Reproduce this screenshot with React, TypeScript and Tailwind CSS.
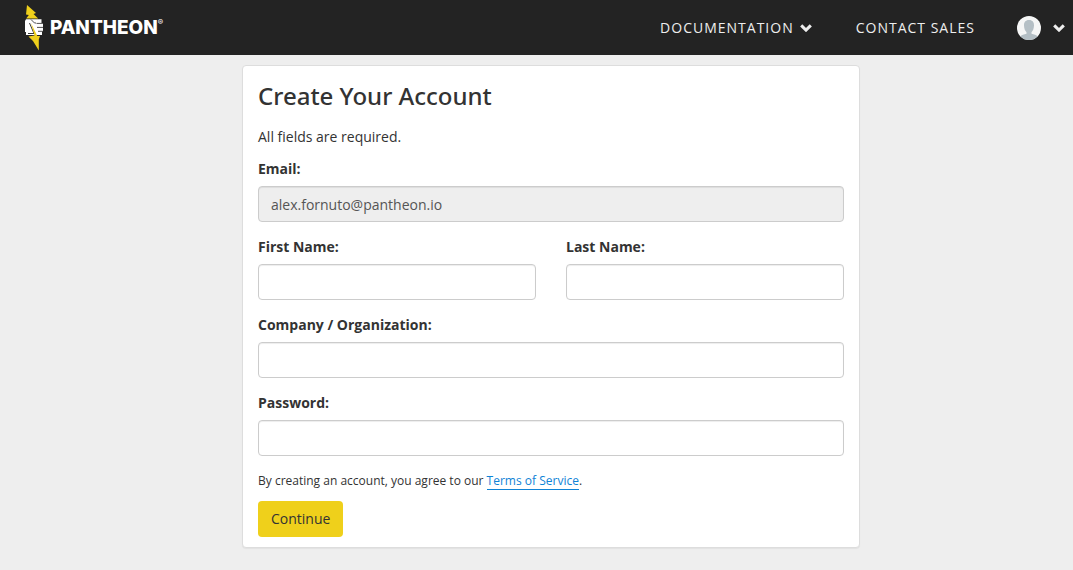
import React from "react";

const inputClass =
  "block h-9 w-full rounded border border-[#cccccc] bg-white px-3 text-sm text-[#555555] shadow-[inset_0_1px_1px_rgba(0,0,0,0.075)] outline-none focus:border-[#66afe9] disabled:bg-[#eeeeee]";

type FieldProps = {
  id: string;
  label: string;
  type?: string;
  value?: string;
  disabled?: boolean;
};

function Field({ id, label, type = "text", value, disabled }: FieldProps) {
  return (
    <div className="mb-[15px] min-w-0 flex-1">
      <label htmlFor={id} className="mb-[7px] block text-sm leading-5 font-bold">
        {label}
      </label>
      <input id={id} type={type} defaultValue={value} disabled={disabled} className={inputClass} />
    </div>
  );
}

function Chevron() {
  return (
    <svg width="12" height="8" viewBox="0 0 12 8" fill="none" aria-hidden="true">
      <path d="M1.2 1.4 6 6.1l4.8-4.7" stroke="#eeeeee" strokeWidth="3" />
    </svg>
  );
}

function Fist() {
  return (
    <svg width="18" height="46" viewBox="0 0 18 46" aria-hidden="true">
      <path d="M2 0 11 8 8.5 9 13.2 13.6H1.2L3.800 10 1 9.500Z" fill="#efd01b" />
      <path d="M1 14.300H16.500V18H18V26.500H17V30H1V27H0V16Z" fill="#ffffff" />
      <path
        d="M11.500 18.400H18M12 22.400H18M13 26.300H18M6 14.500 9.500 18H11"
        stroke="#232323"
        strokeWidth="0.8"
        fill="none"
      />
      <path d="M4.500 18 9 28.500H3" fill="none" stroke="#232323" strokeWidth="0.9" />
      <path d="M6 18 12.300 31H15L13.800 34.500 13.800 45.500 8 36 3.500 31.500 9.500 30.500Z" fill="#efd01b" />
    </svg>
  );
}

function Avatar() {
  return (
    <svg width="24" height="24" viewBox="0 0 24 24" aria-hidden="true">
      <defs>
        <clipPath id="avatar-clip">
          <circle cx="12" cy="12" r="12" />
        </clipPath>
      </defs>
      <g clipPath="url(#avatar-clip)">
        <rect width="24" height="24" fill="#f5f6f6" />
        <path
          d="M12 4c3.600 0 5.200 2.400 5 5.600-.1 3.300-1.200 5.500-2.500 6.700v1.500c2.300.7 5 1.200 6.500 3V24H3v-3.200c1.500-1.800 4.200-2.300 6.500-3v-1.500C8.200 15.100 7.100 12.900 7 9.600 6.800 6.400 8.400 4 12 4Z"
          fill="#b4bfc5"
        />
      </g>
    </svg>
  );
}

export default function App() {
  return (
    <div className="min-h-screen bg-[#eeeeee] font-['Open_Sans',sans-serif] text-sm text-[#333333]">
      <header className="flex h-[55px] items-center justify-between bg-[#232323] pr-2 pl-[25px]">
        <a href="#" aria-label="Pantheon home" className="flex items-center gap-[7px] text-white">
          <Fist />
          <span className="flex items-start font-['Inter',sans-serif]">
            <span className="text-[19px] leading-6 font-extrabold">PANTHEON</span>
            <span className="text-[8px] leading-3">®</span>
          </span>
        </a>
        <nav className="flex items-center tracking-[1px] text-[#eeeeee]">
          <button type="button" className="mr-11 flex items-center gap-1.5 tracking-[1px]">
            DOCUMENTATION <Chevron />
          </button>
          <a href="#" className="mr-[42px]">
            CONTACT SALES
          </a>
          <button type="button" aria-label="Account menu" className="flex items-center gap-3">
            <Avatar />
            <Chevron />
          </button>
        </nav>
      </header>

      <main className="pt-2.5 pb-5 pl-[29px]">
        <section className="mx-auto max-w-[618px] rounded border border-[#dddddd] bg-white px-[15px] pt-4 pb-2.5 shadow-[0_1px_1px_rgba(0,0,0,0.05)]">
          <h1 className="mb-[17px] font-['Noto_Sans',sans-serif] text-2xl leading-7 font-medium">
            Create Your Account
          </h1>
          <p className="mb-3 leading-5">All fields are required.</p>
          <form onSubmit={(event) => event.preventDefault()}>
            <Field id="email" label="Email:" type="email" value="alex.fornuto@pantheon.io" disabled />
            <div className="flex gap-[30px]">
              <Field id="first-name" label="First Name:" />
              <Field id="last-name" label="Last Name:" />
            </div>
            <Field id="company" label="Company / Organization:" />
            <Field id="password" label="Password:" type="password" />
            <p className="mb-2.5 text-xs leading-5">
              By creating an account, you agree to our{" "}
              <a href="#" className="border-b border-[#0f83d6] text-[#0f83d6]">
                Terms of Service
              </a>
              .
            </p>
            <button type="submit" className="h-9 rounded bg-[#efd01b] px-[13px] text-sm">
              Continue
            </button>
          </form>
        </section>
      </main>
    </div>
  );
}
